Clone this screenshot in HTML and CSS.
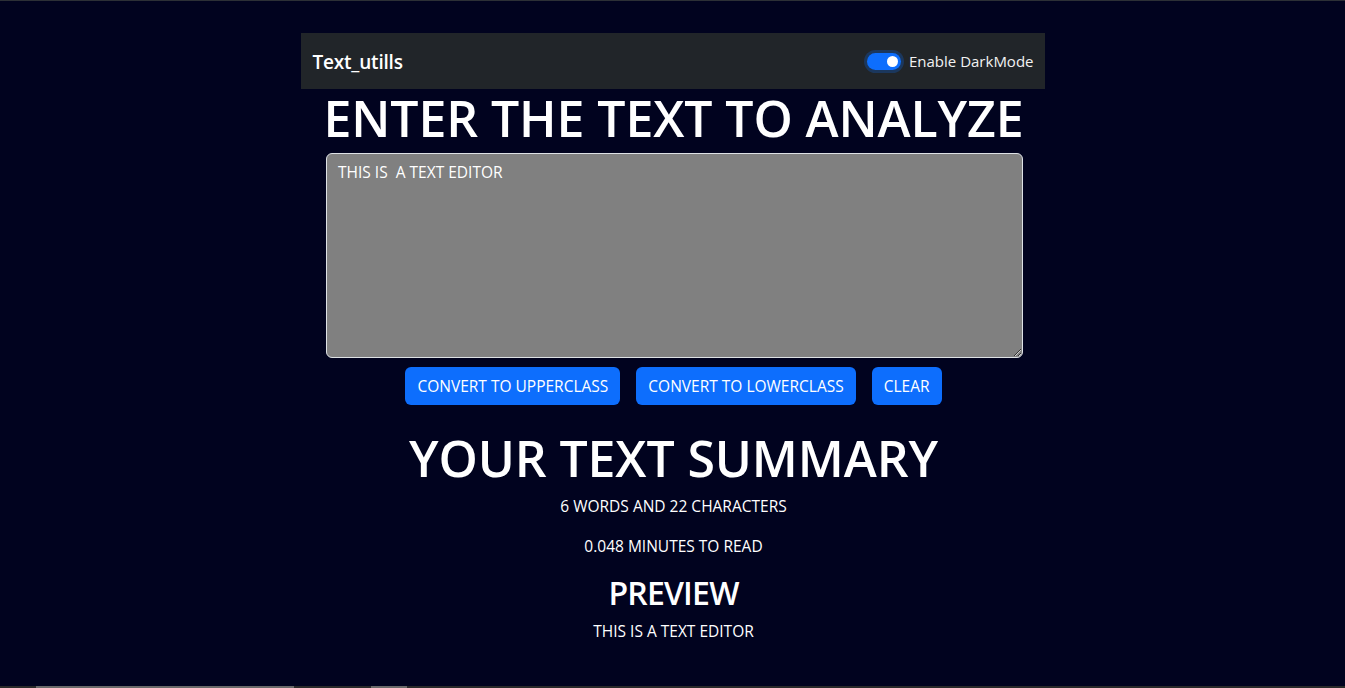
FILE: index.html
```html
<!DOCTYPE html>
<html lang="en">
<head>
<meta charset="utf-8">
<title>Text_utills</title>
<link rel="stylesheet" href="styles.css">
</head>
<body>
<nav class="navbar">
  <span class="brand">Text_utills</span>
  <label class="switch">
    <span class="track"><span class="knob"></span></span>
    <span class="switch-label">Enable DarkMode</span>
  </label>
</nav>
<main class="container">
  <h1 class="title">ENTER THE TEXT TO ANALYZE</h1>
  <textarea class="editor">THIS IS  A TEXT EDITOR</textarea>
  <div class="actions">
    <button class="btn">CONVERT TO UPPERCLASS</button>
    <button class="btn">CONVERT TO LOWERCLASS</button>
    <button class="btn">CLEAR</button>
  </div>
  <h1 class="title summary">YOUR TEXT SUMMARY</h1>
  <p class="stat">6 WORDS AND 22 CHARACTERS</p>
  <p class="stat">0.048 MINUTES TO READ</p>
  <h2 class="preview-title">PREVIEW</h2>
  <p class="preview">THIS IS A TEXT EDITOR</p>
</main>
<div class="hscroll"><span class="thumb"></span><span class="thumb2"></span></div>
</body>
</html>
```
FILE: styles.css
```css
* { box-sizing: border-box; }
html, body { height: 100%; }
body {
  margin: 0;
  background: #01031f;
  border-top: 1px solid #2c3036;
  color: #ffffff;
  font-family: "Open Sans", "Noto Sans", sans-serif;
  overflow: hidden;
}
.navbar {
  width: 744px;
  height: 56px;
  margin: 32px auto 0;
  background: #212529;
  display: flex;
  align-items: center;
  justify-content: space-between;
  padding: 0 11px 0 12px;
}
.brand {
  font-size: 19px;
  font-weight: 600;
  letter-spacing: -0.2px;
  padding-top: 2px;
}
.switch {
  display: flex;
  align-items: center;
  gap: 7px;
}
.track {
  width: 34px;
  height: 17px;
  border-radius: 9px;
  background: #0d6efd;
  box-shadow: 0 0 0 3px rgba(13, 110, 253, 0.25);
  display: flex;
  align-items: center;
  justify-content: flex-end;
  padding-right: 3px;
}
.knob {
  width: 11px;
  height: 11px;
  border-radius: 50%;
  background: #ffffff;
}
.switch-label {
  font-size: 15px;
  color: #f2f2f2;
  padding-left: 1px;
}
.container {
  width: 697px;
  margin: 0 auto;
  padding-left: 2px;
  display: flex;
  flex-direction: column;
  align-items: center;
}
.title {
  margin: 0;
  padding-top: 2px;
  font-size: 50px;
  line-height: 55px;
  font-weight: 600;
  letter-spacing: -0.1px;
  white-space: nowrap;
}
.editor {
  display: block;
  width: 697px;
  height: 205px;
  margin-top: 7px;
  margin-left: 2px;
  background: #808080;
  color: #ffffff;
  border: 1px solid #dee2e6;
  border-radius: 6px;
  padding: 6px 11px;
  font-family: inherit;
  font-size: 15.5px;
  line-height: 24px;
  resize: vertical;
  outline: none;
}
.actions {
  display: flex;
  gap: 16px;
  margin-top: 9px;
}
.btn {
  height: 38px;
  padding: 0 12px;
  background: #0d6efd;
  border: none;
  border-radius: 6px;
  color: #ffffff;
  font-family: inherit;
  font-size: 15.5px;
}
.summary { margin-top: 24px; }
.stat {
  margin: 8px 0 0;
  font-size: 15.5px;
  line-height: 24px;
}
.stat + .stat { margin-top: 16px; }
.preview-title {
  margin: 15px 0 0;
  font-size: 32px;
  line-height: 40px;
  font-weight: 600;
  letter-spacing: -0.8px;
}
.preview {
  margin: 6px 0 0;
  font-size: 15.5px;
  line-height: 24px;
}
.hscroll {
  position: fixed;
  left: 0;
  right: 0;
  bottom: 0;
  height: 2px;
  background: #2a2a2a;
}
.thumb {
  position: absolute;
  left: 36px;
  width: 258px;
  top: 0;
  height: 2px;
  background: #6a6a6a;
}
.thumb2 {
  position: absolute;
  left: 371px;
  width: 36px;
  top: 0;
  height: 2px;
  background: #6a6a6a;
}
```
